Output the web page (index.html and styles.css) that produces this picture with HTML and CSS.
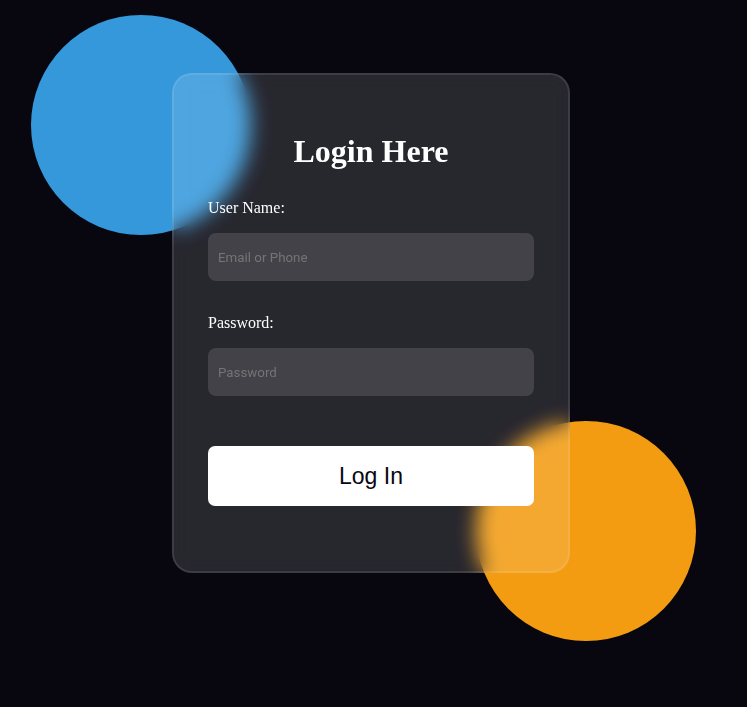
FILE: index.html
```html
<!DOCTYPE html>
<html lang="en">
<head>
<meta charset="utf-8">
<title>Login Here</title>
<link rel="stylesheet" href="styles.css">
</head>
<body>
<div class="stage">
  <div class="shape shape-blue"></div>
  <div class="shape shape-orange"></div>
  <form class="card">
    <h3 class="title">Login Here</h3>
    <label class="label" for="username">User Name:</label>
    <input class="field" id="username" type="text" placeholder="Email or Phone">
    <label class="label label-gap" for="password">Password:</label>
    <input class="field" id="password" type="password" placeholder="Password">
    <button class="btn" type="button">Log In</button>
  </form>
</div>
</body>
</html>
```

FILE: styles.css
```css
* {
  box-sizing: border-box;
}

html, body {
  margin: 0;
  padding: 0;
  background: #080710;
}

.stage {
  position: relative;
  width: 747px;
  height: 707px;
  overflow: hidden;
  padding-top: 73px;
  padding-left: 172px;
}

.shape {
  position: absolute;
  width: 220px;
  height: 220px;
  border-radius: 50%;
}

.shape-blue {
  left: 31px;
  top: 15px;
  background: #3498db;
}

.shape-orange {
  left: 476px;
  top: 421px;
  background: #f39c12;
}

.card {
  position: relative;
  width: 398px;
  height: 500px;
  margin: 0;
  padding: 60px 34px 0;
  display: flex;
  flex-direction: column;
  background: rgba(255, 255, 255, 0.13);
  border: 2px solid rgba(255, 255, 255, 0.1);
  border-radius: 20px;
  backdrop-filter: blur(10px);
  -webkit-backdrop-filter: blur(10px);
}

.title {
  margin: 0;
  font-family: "Liberation Serif", "Times New Roman", serif;
  font-weight: 700;
  font-size: 32px;
  line-height: 32px;
  color: #ffffff;
  text-align: center;
}

.label {
  display: block;
  margin-top: 33px;
  font-family: "Liberation Serif", "Times New Roman", serif;
  font-size: 16px;
  line-height: 16px;
  color: #ffffff;
}

.label-gap {
  margin-top: 34px;
}

.field {
  display: block;
  width: 100%;
  height: 48px;
  margin-top: 17px;
  padding: 0 10px;
  border: none;
  outline: none;
  border-radius: 8px;
  background: rgba(255, 255, 255, 0.13);
  color: #e5e5e5;
  font-family: Roboto, "Liberation Sans", sans-serif;
  font-size: 13.333px;
}

.field::placeholder {
  color: #757575;
}

.btn {
  display: flex;
  align-items: center;
  justify-content: center;
  width: 100%;
  height: 60px;
  margin-top: 50px;
  padding: 0;
  border: none;
  border-radius: 7px;
  background: #ffffff;
  color: #080710;
  font-family: "Liberation Sans", Arial, sans-serif;
  font-size: 23px;
  cursor: pointer;
}
```
